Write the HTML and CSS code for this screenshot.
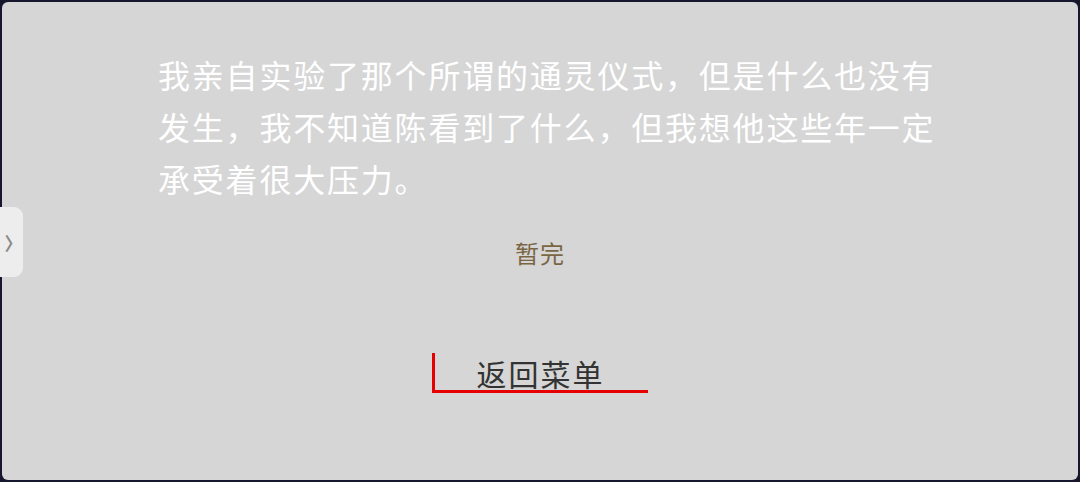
FILE: index.html
```html
<!DOCTYPE html>
<html lang="zh">
<head>
<meta charset="utf-8">
<link rel="stylesheet" href="styles.css">
</head>
<body>
<div class="frame">
  <div class="panel">
    <div class="drawer-tab"><span class="chev">〉</span></div>
    <p class="story">我亲自实验了那个所谓的通灵仪式，但是什么也没有发生，我不知道陈看到了什么，但我想他这些年一定承受着很大压力。</p>
    <div class="status">暂完</div>
    <div class="menu-btn">返回菜单</div>
  </div>
</div>
</body>
</html>
```
FILE: styles.css
```css
html, body {
  margin: 0;
  padding: 0;
  width: 1080px;
  height: 482px;
  background: #16162c;
  overflow: hidden;
}
.frame {
  padding: 2px;
  height: 478px;
}
.panel {
  position: relative;
  height: 478px;
  box-sizing: border-box;
  background: #d6d6d6;
  border-radius: 6px;
  display: flex;
  flex-direction: column;
  align-items: center;
  font-family: "Noto Sans CJK SC", "Noto Sans", sans-serif;
}
.story {
  margin: 46px 0 0 156px;
  width: 790px;
  align-self: flex-start;
  color: #ffffff;
  font-size: 32px;
  line-height: 52px;
  letter-spacing: 1.8px;
}
.status {
  margin-top: 34px;
  color: #7a6644;
  font-size: 24px;
  line-height: 30px;
  letter-spacing: 1px;
}
.menu-btn {
  margin-top: 85px;
  width: 216px;
  height: 40px;
  box-sizing: border-box;
  border-left: 3px solid #e60000;
  border-bottom: 3px solid #e60000;
  color: #333333;
  font-size: 30px;
  line-height: 40px;
  text-align: center;
  letter-spacing: 2px;
  padding-right: 2px;
}
.drawer-tab {
  position: absolute;
  left: -2px;
  top: 205px;
  width: 23px;
  height: 70px;
  background: #ededed;
  border-radius: 0 9px 9px 0;
  display: flex;
  align-items: center;
  justify-content: center;
}
.chev {
  color: #8a8a8a;
  font-size: 18px;
  line-height: 18px;
  font-weight: bold;
  margin-left: 4px;
}
```
